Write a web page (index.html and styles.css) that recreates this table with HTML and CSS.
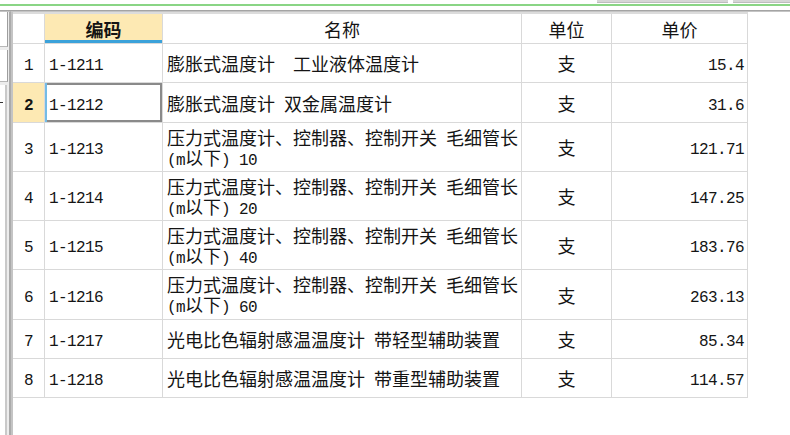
FILE: index.html
```html
<!DOCTYPE html>
<html lang="zh">
<head>
<meta charset="utf-8">
<link rel="stylesheet" href="styles.css">
</head>
<body>
<div class="top">
  <div class="btns"><span class="btn b1"></span><span class="btn b2"></span></div>
  <div class="green"></div>
</div>
<div class="main">
  <div class="left">
    <div class="box box1"></div>
    <div class="box box2"></div>
    <div class="box box3"><span class="dash"></span></div>
  </div>
  <div class="gridwrap">
    <div class="grid">
      <div class="c hd rn"></div>
      <div class="c hd code sel-h">编码</div>
      <div class="c hd name">名称</div>
      <div class="c hd unit">单位</div>
      <div class="c hd price">单价</div>

      <div class="c rn mono">1</div>
      <div class="c code mono">1-1211</div>
      <div class="c name">膨胀式温度计&ensp;&ensp;工业液体温度计</div>
      <div class="c unit">支</div>
      <div class="c price mono">15.4</div>

      <div class="c rn mono cur">2</div>
      <div class="c code mono selcell">1-1212</div>
      <div class="c name">膨胀式温度计&ensp;双金属温度计</div>
      <div class="c unit">支</div>
      <div class="c price mono">31.6</div>

      <div class="c rn mono">3</div>
      <div class="c code mono">1-1213</div>
      <div class="c name"><div class="two">压力式温度计、控制器、控制开关&ensp;毛细管长<br><span class="m">(m</span>以下<span class="m">) 10</span></div></div>
      <div class="c unit">支</div>
      <div class="c price mono">121.71</div>

      <div class="c rn mono">4</div>
      <div class="c code mono">1-1214</div>
      <div class="c name"><div class="two">压力式温度计、控制器、控制开关&ensp;毛细管长<br><span class="m">(m</span>以下<span class="m">) 20</span></div></div>
      <div class="c unit">支</div>
      <div class="c price mono">147.25</div>

      <div class="c rn mono">5</div>
      <div class="c code mono">1-1215</div>
      <div class="c name"><div class="two">压力式温度计、控制器、控制开关&ensp;毛细管长<br><span class="m">(m</span>以下<span class="m">) 40</span></div></div>
      <div class="c unit">支</div>
      <div class="c price mono">183.76</div>

      <div class="c rn mono">6</div>
      <div class="c code mono">1-1216</div>
      <div class="c name"><div class="two">压力式温度计、控制器、控制开关&ensp;毛细管长<br><span class="m">(m</span>以下<span class="m">) 60</span></div></div>
      <div class="c unit">支</div>
      <div class="c price mono">263.13</div>

      <div class="c rn mono">7</div>
      <div class="c code mono">1-1217</div>
      <div class="c name">光电比色辐射感温温度计&ensp;带轻型辅助装置</div>
      <div class="c unit">支</div>
      <div class="c price mono">85.34</div>

      <div class="c rn mono">8</div>
      <div class="c code mono">1-1218</div>
      <div class="c name">光电比色辐射感温温度计&ensp;带重型辅助装置</div>
      <div class="c unit">支</div>
      <div class="c price mono">114.57</div>
    </div>
  </div>
</div>
</body>
</html>
```
FILE: styles.css
```css
* { box-sizing: border-box; }
html, body { margin: 0; padding: 0; }
body {
  width: 790px;
  height: 435px;
  overflow: hidden;
  background: #fff;
  font-family: "Noto Sans CJK SC", "Noto Sans", sans-serif;
  font-size: 18px;
  color: #141414;
}
.top { height: 10px; }
.btns { display: flex; height: 3px; padding-left: 597px; }
.btn { display: block; height: 3px; background: #d6d6d6; border-bottom: 1px solid #bdbdbd; }
.b1 { width: 131px; }
.b2 { width: 57px; margin-left: 5px; }
.green { height: 2px; margin-top: 1px; background: #8ad585; }
.main {
  display: flex;
  height: 425px;
  border-top: 1px solid #a4a4a4;
}
.left {
  width: 11px;
  flex: none;
  display: flex;
  flex-direction: column;
  gap: 3px;
  background: #ededed;
  border-top: 1px solid #c4c4c4;
  border-right: 2px solid #ababab;
}
.box { width: 8px; background: #fff; border-right: 1px solid #9e9e9e; border-bottom: 1px solid #b8b8b8; position: relative; }
.box1 { height: 35px; }
.box2 { height: 32px; }
.box3 { flex: 1; width: 7px; border-right: 2px solid #c9c9c9; border-bottom: none; }
.dash { position: absolute; left: 0; top: 17px; width: 3px; height: 1px; background: #333; }
.gridwrap {
  flex: 1;
  border-top: 1px solid #c4c4c4;
  border-left: 2px solid #c4c4c4;
}
.grid {
  display: grid;
  grid-template-columns: 32px 118px 359px 90px 136px;
  grid-template-rows: 30px 39px 40px 49px 49px 49px 50px 39px 39px;
  width: 735px;
  border-top: 2px solid #dcdcdc;
}
.c {
  display: flex;
  align-items: center;
  border-right: 1px solid #d9d9d9;
  border-bottom: 1px solid #d9d9d9;
  white-space: nowrap;
  line-height: 20px;
}
.two { line-height: 20px; padding-top: 1px; }
.mono {
  font-family: "Liberation Mono", "DejaVu Sans Mono", monospace;
  font-size: 16px;
  letter-spacing: -0.6px;
  padding-top: 6px;
}
.m {
  font-family: "Liberation Mono", "DejaVu Sans Mono", monospace;
  font-size: 16px;
  letter-spacing: -0.6px;
  line-height: 16px;
}
.rn { justify-content: center; }
.code { padding-left: 4px; }
.name { padding-left: 4px; }
.unit { justify-content: center; }
.price { justify-content: flex-end; padding-right: 3px; }
.hd { justify-content: center; padding: 0; font-size: 18px; }
.sel-h {
  background: #fde9b3;
  font-weight: bold;
  box-shadow: inset 0 -3px 0 #3ba2da;
}
.cur { background: #fde9b3; font-weight: bold; }
.selcell {
  box-shadow: inset 2px 0 0 #74bce6, inset 0 0 0 2px #8a8a8a;
}
```
